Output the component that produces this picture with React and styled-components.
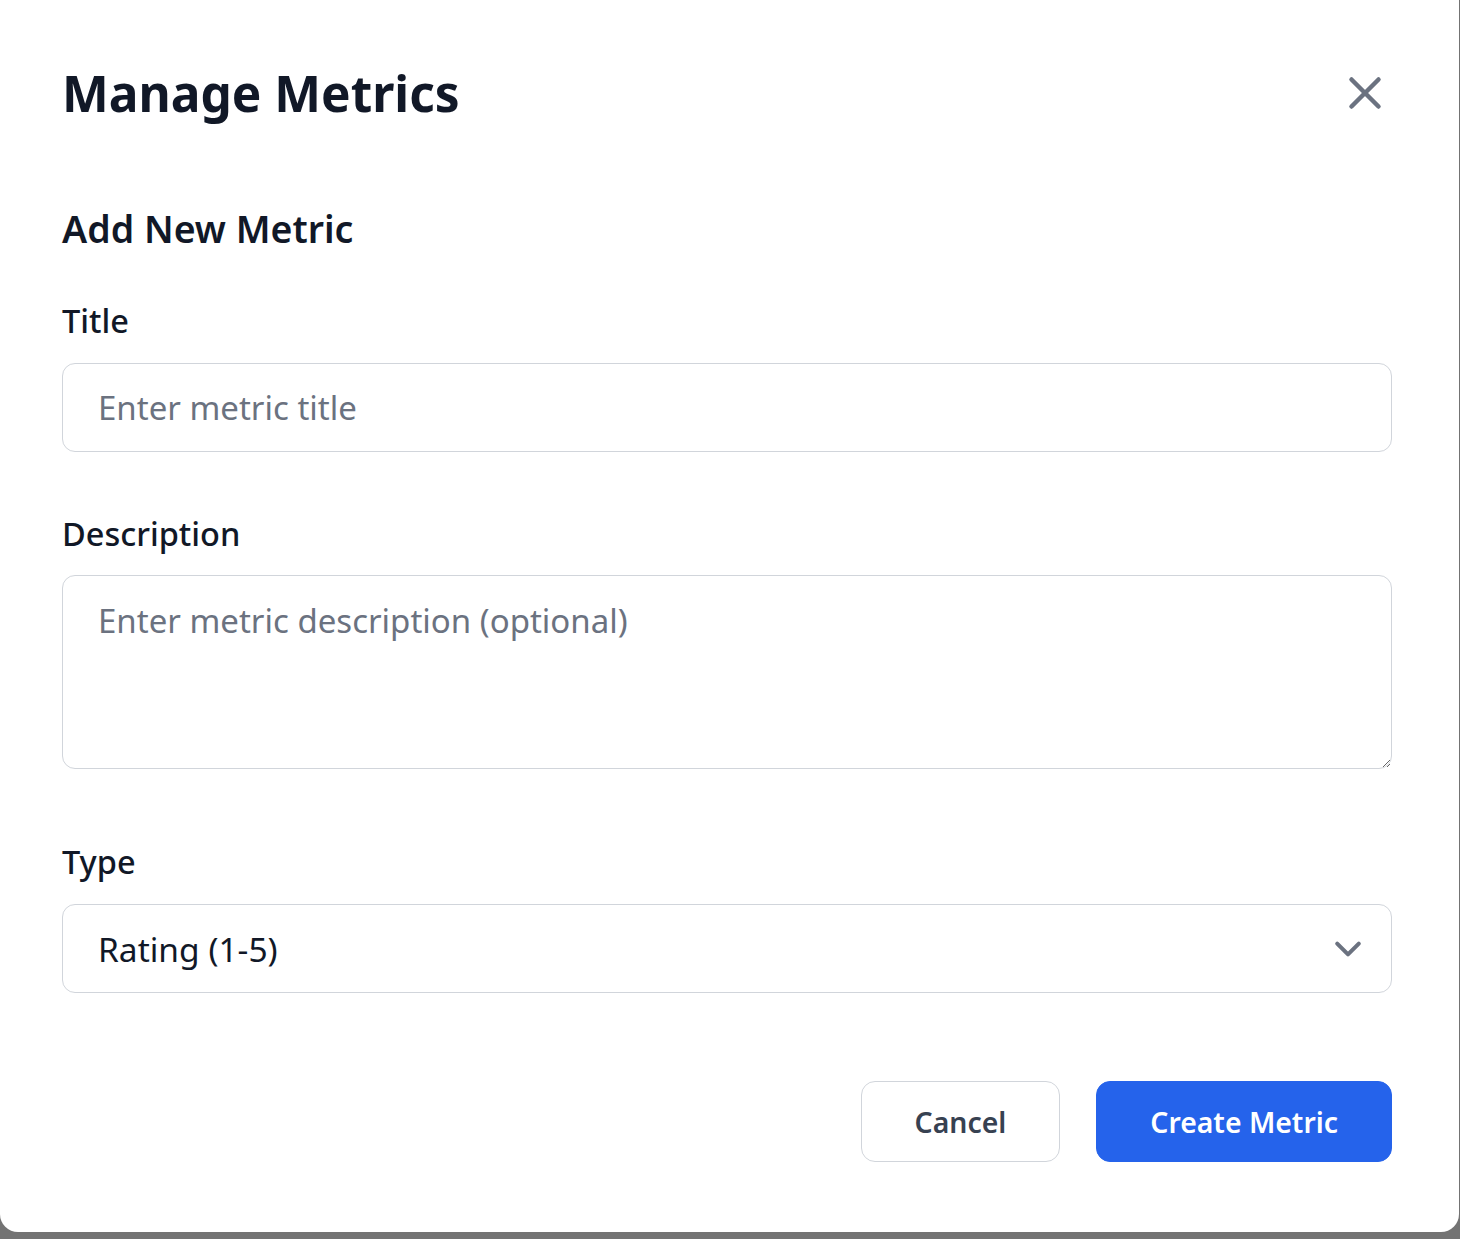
import React, { useState } from "react";
import styled, { createGlobalStyle } from "styled-components";
import { X } from "lucide-react";

const GlobalStyle = createGlobalStyle`
  html, body {
    margin: 0;
    padding: 0;
    background: #737373;
  }
  body {
    font-family: "Noto Sans", "Open Sans", Arial, sans-serif;
    overflow: hidden;
  }
  * {
    box-sizing: border-box;
  }
`;

const Modal = styled.div`
  width: 1459px;
  background: #ffffff;
  border-radius: 0 0 18px 18px;
  padding: 57px 67px 70px 62px;
`;

const Header = styled.div`
  height: 72px;
  display: flex;
  align-items: center;
  justify-content: space-between;
  margin-bottom: 68px;
`;

const Heading = styled.h2`
  margin: 0;
  font-size: 49.6px;
  line-height: 72px;
  font-weight: 700;
  color: #111827;
`;

const CloseButton = styled.button`
  width: 54px;
  height: 54px;
  padding: 0;
  border: 0;
  background: none;
  color: #6b7280;
  display: flex;
  align-items: center;
  justify-content: center;
  cursor: pointer;
`;

const SubHeading = styled.h3`
  margin: 0 0 38px;
  font-size: 37.5px;
  line-height: 63px;
  font-weight: 600;
  color: #111827;
`;

const Field = styled.div`
  margin-bottom: ${(p) => p.$gap}px;
`;

const Label = styled.label`
  display: block;
  margin-bottom: 20px;
  font-size: 32.5px;
  line-height: 45px;
  font-weight: 500;
  color: #111827;
`;

const controlStyles = `
  display: block;
  width: 100%;
  border: 1px solid #d1d5db;
  border-radius: 13px;
  background: #ffffff;
  font-family: inherit;
  font-size: 33px;
  color: #111827;
  outline: none;
  &::placeholder {
    color: #6b7280;
  }
`;

const TextInput = styled.input`
  ${controlStyles}
  height: 89px;
  padding: 0 35px;
`;

const TextArea = styled.textarea`
  ${controlStyles}
  height: 194px;
  margin-top: -1px;
  padding: 18px 35px;
  line-height: 54px;
  resize: vertical;
`;

const SelectWrap = styled.div`
  position: relative;
`;

const Select = styled.select`
  ${controlStyles}
  height: 89px;
  padding: 0 90px 0 35px;
  font-size: 33.5px;
  appearance: none;
`;

const Chevron = styled.svg`
  position: absolute;
  right: 17px;
  top: 50%;
  width: 54px;
  height: 54px;
  transform: translateY(-50%);
  pointer-events: none;
`;

const Actions = styled.div`
  display: flex;
  justify-content: flex-end;
  gap: 36px;
`;

const Button = styled.button`
  height: 81px;
  padding: 0 53px;
  border-radius: 14px;
  font-family: inherit;
  font-size: 28.4px;
  font-weight: 600;
  cursor: pointer;
  border: 1px solid ${(p) => (p.$primary ? "#2563eb" : "#d1d5db")};
  background: ${(p) => (p.$primary ? "#2563eb" : "#ffffff")};
  color: ${(p) => (p.$primary ? "#ffffff" : "#374151")};
`;

export default function App() {
  const [title, setTitle] = useState("");
  const [description, setDescription] = useState("");
  const [type, setType] = useState("rating");

  return (
    <>
      <GlobalStyle />
      <Modal>
        <Header>
          <Heading>Manage Metrics</Heading>
          <CloseButton aria-label="Close">
            <X size={54} strokeWidth={2} />
          </CloseButton>
        </Header>

        <SubHeading>Add New Metric</SubHeading>

        <Field $gap={59}>
          <Label>Title</Label>
          <TextInput
            placeholder="Enter metric title"
            value={title}
            onChange={(e) => setTitle(e.target.value)}
          />
        </Field>

        <Field $gap={70}>
          <Label>Description</Label>
          <TextArea
            placeholder="Enter metric description (optional)"
            value={description}
            onChange={(e) => setDescription(e.target.value)}
          />
        </Field>

        <Field $gap={88}>
          <Label>Type</Label>
          <SelectWrap>
            <Select value={type} onChange={(e) => setType(e.target.value)}>
              <option value="rating">Rating (1-5)</option>
              <option value="yesno">Yes / No</option>
              <option value="number">Number</option>
              <option value="text">Text</option>
            </Select>
            <Chevron viewBox="0 0 20 20" fill="none">
              <path
                d="M6 8l4 4 4-4"
                stroke="#6b7280"
                strokeWidth="1.5"
                strokeLinecap="round"
                strokeLinejoin="round"
              />
            </Chevron>
          </SelectWrap>
        </Field>

        <Actions>
          <Button>Cancel</Button>
          <Button $primary>Create Metric</Button>
        </Actions>
      </Modal>
    </>
  );
}
